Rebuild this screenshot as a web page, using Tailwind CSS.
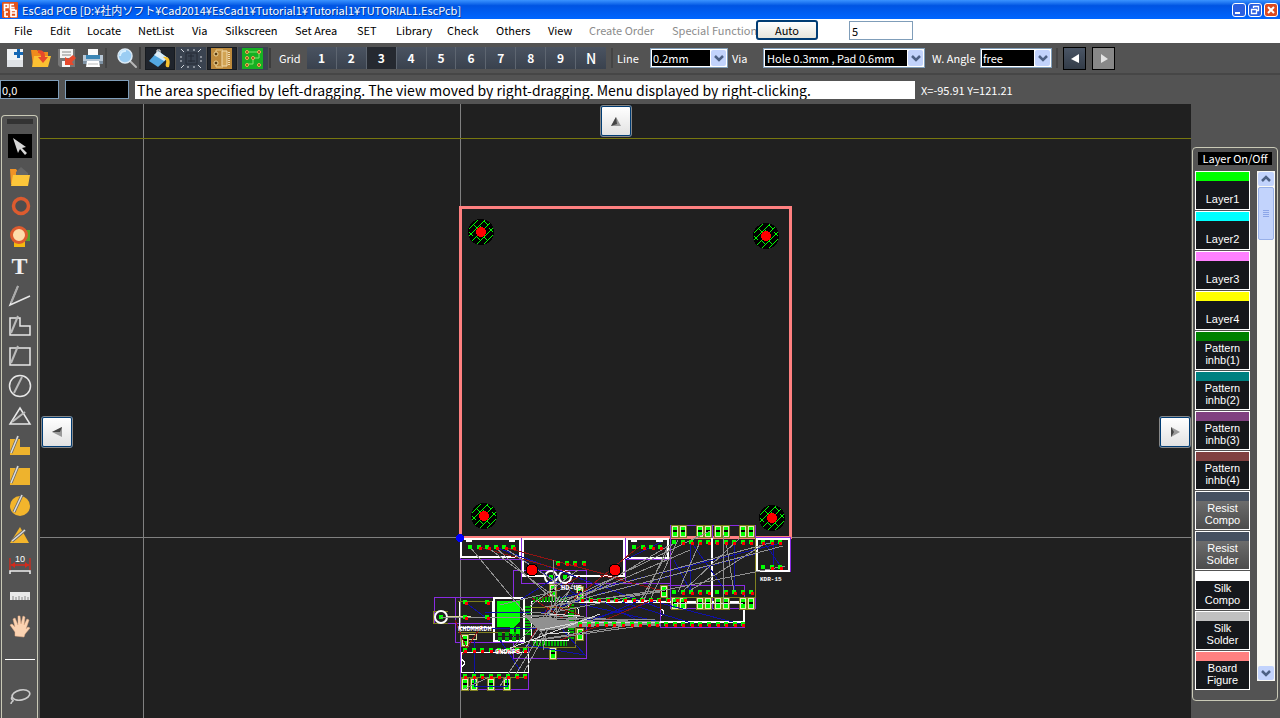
<!DOCTYPE html>
<html lang="en">
<head>
  <meta charset="UTF-8" />
  <meta name="viewport" content="width=device-width, initial-scale=1.0" />
  <title>EsCad PCB</title>
  <script src="https://cdn.jsdelivr.net/npm/@tailwindcss/browser@4"></script>
</head>
<body class="h-screen flex flex-col overflow-hidden bg-[#535353] font-['Noto_Sans_CJK_JP',sans-serif] text-[11px] leading-4 text-white">

  <!-- Title bar -->
  <header class="h-[19px] shrink-0 flex items-center gap-1 px-[2px] bg-linear-to-b from-[#3a93ff] via-[#0054e3] via-30% to-[#0066ff]">
    <svg class="w-4 h-4 shrink-0" viewBox="0 0 16 16">
      <rect width="16" height="16" rx="1" fill="#e2531d" />
      <path d="M2.500 9V2.500h3.500v3H3M8 5.500H12.500M12 2.500H8.500v5H13M3 15V10h3M3 14.500h3M9 15V7.500M9 8.500h5v2.500H9M14 11.500v3H9" fill="none" stroke="#fff" stroke-width="1.700" />
    </svg>
    <h1 class="flex-1 leading-4 whitespace-nowrap [text-shadow:1px_1px_#003a9c]">EsCad PCB [D:¥社内ソフト¥Cad2014¥EsCad1¥Tutorial1¥Tutorial1¥TUTORIAL1.EscPcb]</h1>
    <div class="flex gap-[2px]">
      <button aria-label="Minimize" class="w-[14px] h-[14px] rounded-[3px] border border-white bg-[#2a5fe0]"><svg viewBox="0 0 12 12"><path d="M2 9h5" stroke="#fff" stroke-width="2" /></svg></button>
      <button aria-label="Restore" class="w-[14px] h-[14px] rounded-[3px] border border-white bg-[#2a5fe0]"><svg viewBox="0 0 12 12"><path d="M4.500 4V2.500h5v4H8M2.500 5.500h5v4h-5z" fill="none" stroke="#fff" stroke-width="1.300" /></svg></button>
      <button aria-label="Close" class="w-[14px] h-[14px] rounded-[3px] border border-white bg-[#dc4a20]"><svg viewBox="0 0 12 12"><path d="M3 3l6 6M9 3l-6 6" stroke="#fff" stroke-width="2" /></svg></button>
    </div>
  </header>

  <!-- Menu -->
  <nav class="h-6 shrink-0 flex bg-white text-black">
    <div class="grid grid-cols-[36px_37px_51px_54px_33px_70px_62px_39px_51px_49px_52px_41px_83px_84px] pl-[14px] pb-[2px] whitespace-nowrap">
      <button class="text-left">File</button>
      <button class="text-left">Edit</button>
      <button class="text-left">Locate</button>
      <button class="text-left">NetList</button>
      <button class="text-left">Via</button>
      <button class="text-left">Silkscreen</button>
      <button class="text-left">Set Area</button>
      <button class="text-left">SET</button>
      <button class="text-left">Library</button>
      <button class="text-left">Check</button>
      <button class="text-left">Others</button>
      <button class="text-left">View</button>
      <button disabled class="text-left text-[#8c8c8c]">Create Order</button>
      <button disabled class="text-left text-[#8c8c8c]">Special Function</button>
    </div>
    <button class="w-[62px] h-5 mt-px rounded-[3px] border-2 border-[#003c74] bg-linear-to-b from-white to-[#e6e5dc] leading-4">Auto</button>
    <input aria-label="Count" value="5" class="w-16 h-[19px] mt-[2px] ml-[31px] px-[2px] border border-[#7f9db9] bg-white leading-4" />
  </nav>

  <!-- Toolbar -->
  <div class="h-8 shrink-0 flex items-center border-b-2 border-[#464646] whitespace-nowrap">
    <div class="flex items-center gap-[6px] pl-[5px]">
      <button aria-label="New"><svg class="w-5 h-5" viewBox="0 0 20 20"><path d="M2 1h16v18H2z" fill="#f1f3f5" /><path d="M2 12h16v7H2z" fill="#dfe2e6" /><path d="M13.500 1v9M9 5.500h9" stroke="#1769b5" stroke-width="3" /></svg></button>
      <button aria-label="Open"><svg class="w-5 h-5" viewBox="0 0 20 20"><path d="M0 2h6l2 2h9v14H2z" fill="#f08a1c" /><path d="M3 8h17l-3 11H1z" fill="#fcc032" /><path d="M7 2c6 0 7 3 7 7h3l-5 6-5-6h3c0-3-1-4-3-4z" fill="#e8492c" /></svg></button>
      <button aria-label="Save"><svg class="w-5 h-5" viewBox="0 0 20 20"><path d="M1 1h17v18H3l-2-2z" fill="#777" /><path d="M3 1h13v9H3zM5 13h8v6H5z" fill="#f5f5f5" /><path d="M5 4h9M5 7h9" stroke="#888" /><path d="M16 7l3 3-4 4 2 3H8V9l3 2z" fill="#e8492c" /></svg></button>
      <button aria-label="Print"><svg class="w-5 h-5" viewBox="0 0 20 20"><path d="M5 1h10v8H5z" fill="#fafafa" /><path d="M0 7h20v8H0z" fill="#b9c8d6" /><path d="M3 7h14v4H3z" fill="#3b86b5" /><path d="M0 13h20v3H0z" fill="#7e92a4" /><path d="M4 13h12l1 6H3z" fill="#fff" /><path d="M5 16h10" stroke="#bbb" /></svg></button>
    </div>
    <span class="w-[2px] h-5 ml-[2px] bg-[#444]"></span>
    <button aria-label="Zoom" class="ml-[9px]"><svg class="w-[22px] h-[22px]" viewBox="0 0 22 22"><path d="M13 13l7 7" stroke="#b8b8b8" stroke-width="2" stroke-linecap="round" /><circle cx="9" cy="9" r="7" fill="#9bcdf3" stroke="#dceaf5" stroke-width="1.500" /><path d="M4 9a5 5 0 0 1 6-5" stroke="#d9f0ff" fill="none" stroke-width="2" /></svg></button>
    <span class="w-[2px] h-[22px] ml-px mr-[4px] bg-[#3c3c3c]"></span>
    <div class="flex gap-px">
      <button aria-label="Fill" class="w-[30px] h-[23px] flex items-center justify-center bg-[#1f242c] border border-[#171b20]">
        <svg class="w-[24px] h-[21px]" viewBox="0 0 24 21"><path d="M10 3l10 7-10 9-9-6z" fill="#53a8e2" /><path d="M10 3l10 7-4 3-10-6z" fill="#d5ecfa" /><path d="M9 7V2l3 0v6" fill="none" stroke="#eee" /><path d="M15 9c6-1 8 3 6 10-3 1-4-1-3-4s-1-4-3-6z" fill="#f9c22e" /></svg>
      </button>
      <button aria-label="Select area" class="w-[30px] h-[23px] flex items-center justify-center bg-[#3a4350]">
        <svg class="w-[26px] h-[21px]" viewBox="0 0 26 21"><path d="M8 5h11v11H8zM10 8h6M10 13h7M13 6v8" fill="none" stroke="#242b34" /><path d="M3 1l3 3M23 1l-3 3M3 20l3-3M23 20l-3-3M9 2h2M15 2h2M9 19h2M15 19h2M3 8v2M3 12v2M23 8v2M23 12v2" stroke="#d5d9de" /></svg>
      </button>
      <button aria-label="Component side" class="w-[30px] h-[23px] flex items-center justify-center bg-[#1f242c] border border-[#171b20]">
        <svg class="w-[22px] h-[21px]" viewBox="0 0 22 21"><path d="M0 0h21v21H0z" fill="#bd8a3c" /><path d="M5 5v-3h7M5 16v3h7" fill="none" stroke="#e9cd8d" /><circle cx="5" cy="6" r="2" fill="#5a3c11" stroke="#f3d998" /><circle cx="5" cy="15" r="2" fill="#5a3c11" stroke="#f3d998" /><path d="M11 3h5v15h-5z" fill="#d2a454" stroke="#f2dcae" /><path d="M18 4v13" stroke="#f2dcae" stroke-dasharray="1 1" stroke-width="2" /></svg>
      </button>
      <button aria-label="Solder side" class="w-[30px] h-[23px] flex items-center justify-center bg-[#3a4350]">
        <svg class="w-[22px] h-[21px]" viewBox="0 0 22 21"><path d="M0 0h21v21H0z" fill="#16b022" /><path d="M5 4h6M11 10h6M5 16h6M11 4h6M17 4v6M11 10v6" stroke="#7ee56d" /><g fill="#8c3b10" stroke="#f0b65a"><circle cx="5" cy="4" r="1.500" /><circle cx="17" cy="4" r="1.500" /><circle cx="5" cy="10" r="1.500" /><circle cx="11" cy="10" r="1.500" /><circle cx="5" cy="17" r="1.500" /><circle cx="17" cy="17" r="1.500" /></g></svg>
      </button>
    </div>
    <span class="w-[2px] h-5 ml-px bg-[#3c3c3c]"></span>
    <span class="w-[36px] pl-2">Grid</span>
    <div class="grid grid-cols-10 w-[299px] h-[22px] divide-x divide-[#5d6570] bg-linear-to-b from-[#4a5361] to-[#3a424e] font-bold text-[12px]">
      <button>1</button>
      <button>2</button>
      <button class="bg-[#252930]">3</button>
      <button>4</button>
      <button>5</button>
      <button>6</button>
      <button>7</button>
      <button>8</button>
      <button>9</button>
      <button class="font-medium text-[14px]">N</button>
    </div>
    <span class="w-[2px] h-5 ml-[5px] bg-[#444]"></span>
    <label for="line" class="w-[37px] pl-1">Line</label>
    <div class="flex w-[78px] h-5 p-px border border-[#7f9db9] bg-white">
      <select id="line" class="flex-1 min-w-0 appearance-none bg-black pl-px leading-4 text-white"><option>0.2mm</option></select>
      <svg class="w-4 h-4 shrink-0 pointer-events-none" viewBox="0 0 16 16"><rect x="1" width="15" height="16" rx="2" fill="#c2d3fc" /><path d="M5 6l4 4 4-4" fill="none" stroke="#4d6185" stroke-width="2.500" /></svg>
    </div>
    <label for="via" class="w-[35px] pl-1">Via</label>
    <div class="flex w-[162px] h-5 p-px border border-[#7f9db9] bg-white">
      <select id="via" class="flex-1 min-w-0 appearance-none bg-black pl-[2px] leading-4 text-white"><option>Hole 0.3mm , Pad 0.6mm</option></select>
      <svg class="w-4 h-4 shrink-0 pointer-events-none" viewBox="0 0 16 16"><rect x="1" width="15" height="16" rx="2" fill="#c2d3fc" /><path d="M5 6l4 4 4-4" fill="none" stroke="#4d6185" stroke-width="2.500" /></svg>
    </div>
    <label for="angle" class="w-[55px] pl-[7px]">W. Angle</label>
    <div class="flex w-[72px] h-5 p-px border border-[#7f9db9] bg-white">
      <select id="angle" class="flex-1 min-w-0 appearance-none bg-black pl-px leading-4 text-white"><option>free</option></select>
      <svg class="w-4 h-4 shrink-0 pointer-events-none" viewBox="0 0 16 16"><rect x="1" width="15" height="16" rx="2" fill="#c2d3fc" /><path d="M5 6l4 4 4-4" fill="none" stroke="#4d6185" stroke-width="2.500" /></svg>
    </div>
    <span class="w-[2px] h-5 ml-1 bg-[#444]"></span>
    <button aria-label="Back" class="w-[23px] h-[23px] ml-[5px] border border-black bg-linear-to-b from-[#4a5565] to-[#333c48]"><svg viewBox="0 0 21 21"><path d="M7 11l8-5v9z" fill="#fff" /></svg></button>
    <button aria-label="Forward" class="w-[23px] h-[23px] ml-[6px] border border-black bg-[#888]"><svg viewBox="0 0 21 21"><path d="M15 11L8 6v9z" fill="#e4e4e4" /></svg></button>
  </div>

  <!-- Status row -->
  <div class="h-[29px] shrink-0 flex items-center whitespace-nowrap">
    <input aria-label="Position" value="0,0" class="w-[59px] h-[19px] px-px border border-[#7f9db9] bg-black leading-4" />
    <input aria-label="Size" class="w-16 h-[19px] ml-[6px] px-px border border-[#7f9db9] bg-black" />
    <p class="w-[780px] h-[18px] ml-[6px] pl-[2px] overflow-hidden bg-white text-black text-[14px] leading-[18px]">The area specified by left-dragging. The view moved by right-dragging. Menu displayed by right-clicking.</p>
    <output class="ml-[6px]">X=-95.91 Y=121.21</output>
  </div>

  <main class="flex-1 min-h-0 flex">

    <!-- Tools -->
    <aside class="w-10 shrink-0 pt-[11px] pl-px pr-[2px]">
      <div class="h-full flex flex-col items-center rounded-t-[4px] border border-b-0 border-[#c9c9b6] pt-[3px]">
        <div class="w-[26px] h-[5px] shrink-0 mb-[7px] bg-[#333]"></div>
        <button aria-label="Select" class="h-[30px] shrink-0"><svg class="w-6 h-6" viewBox="0 0 24 24"><path d="M0 0h24v24H0z" fill="#000" /><path d="M5 4l13 9-4 1 5 5-2 2-5-6-2 4z" fill="#d6d6d6" /></svg></button>
        <button aria-label="Parts" class="h-[30px] shrink-0"><svg class="w-6 h-6" viewBox="0 0 24 24"><path d="M2 5h6l2 3h9v12H3z" fill="#f09326" /><path d="M8 8l5-5 7 6v4H8z" fill="#666" /><path d="M5 11h17l-2 11H3z" fill="#fcc63a" /></svg></button>
        <button aria-label="Pad" class="h-[30px] shrink-0"><svg class="w-6 h-6" viewBox="0 0 24 24"><circle cx="13" cy="12" r="7.500" fill="#4d4d4d" stroke="#dc5b2f" stroke-width="3.500" /></svg></button>
        <button aria-label="Via" class="h-[30px] shrink-0"><svg class="w-6 h-6" viewBox="0 0 24 24"><path d="M15 6h7v11h-7z" fill="#56a02b" /><path d="M6 16h11v7H6z" fill="#f4b90f" /><circle cx="11" cy="11" r="7.500" fill="#fddcaa" stroke="#dc5b2f" stroke-width="3" /></svg></button>
        <button class="h-[30px] shrink-0 font-['Liberation_Serif',serif] font-bold text-[24px] leading-6 text-[#eee]">T</button>
        <button aria-label="Line" class="h-[30px] shrink-0"><svg class="w-6 h-6" viewBox="0 0 24 24"><path d="M10 2L2 21l20-9" fill="none" stroke="#e8e8e8" stroke-width="1.500" /><path d="M10 2L3 19" stroke="#aaa" stroke-width="2" /></svg></button>
        <button aria-label="Polyline" class="h-[30px] shrink-0"><svg class="w-6 h-6" viewBox="0 0 24 24"><path d="M2 4h10v8h10v9H2z" fill="none" stroke="#e8e8e8" stroke-width="1.500" /><path d="M10 2L3 19" stroke="#bbb" stroke-width="2" /></svg></button>
        <button aria-label="Rectangle" class="h-[30px] shrink-0"><svg class="w-6 h-6" viewBox="0 0 24 24"><path d="M2 4h20v17H2z" fill="none" stroke="#e8e8e8" stroke-width="1.500" /><path d="M10 2L3 19" stroke="#bbb" stroke-width="2" /></svg></button>
        <button aria-label="Circle" class="h-[30px] shrink-0"><svg class="w-6 h-6" viewBox="0 0 24 24"><circle cx="12" cy="12" r="10.500" fill="none" stroke="#e8e8e8" stroke-width="1.500" /><path d="M14 3L6 19" stroke="#bbb" stroke-width="2" /></svg></button>
        <button aria-label="Triangle" class="h-[30px] shrink-0"><svg class="w-6 h-6" viewBox="0 0 24 24"><path d="M12 4l10 16H2z" fill="none" stroke="#e8e8e8" stroke-width="1.500" /><path d="M17 8L4 18" stroke="#bbb" stroke-width="2" /></svg></button>
        <button aria-label="Filled polyline" class="h-[30px] shrink-0"><svg class="w-6 h-6" viewBox="0 0 24 24"><path d="M2 5h10v8h10v8H2z" fill="#eeb32d" /><path d="M10 2L3 19" stroke="#666" stroke-width="3" /><path d="M10 2L3 19" stroke="#ddd" stroke-width="1.500" /></svg></button>
        <button aria-label="Filled rectangle" class="h-[30px] shrink-0"><svg class="w-6 h-6" viewBox="0 0 24 24"><path d="M2 4h20v17H2z" fill="#eeb32d" /><path d="M10 2L3 19" stroke="#666" stroke-width="3" /><path d="M10 2L3 19" stroke="#ddd" stroke-width="1.500" /></svg></button>
        <button aria-label="Filled circle" class="h-[30px] shrink-0"><svg class="w-6 h-6" viewBox="0 0 24 24"><circle cx="12" cy="12" r="10" fill="#f3b52c" /><path d="M14 1L6 18" stroke="#666" stroke-width="3" /><path d="M14 1L6 18" stroke="#ddd" stroke-width="1.500" /></svg></button>
        <button aria-label="Filled triangle" class="h-[30px] shrink-0"><svg class="w-6 h-6" viewBox="0 0 24 24"><path d="M12 3l9 16H2z" fill="#f3b52c" /><path d="M17 6L4 17" stroke="#666" stroke-width="3" /><path d="M17 6L4 17" stroke="#ddd" stroke-width="1.500" /></svg></button>
        <button aria-label="Dimension" class="h-[30px] shrink-0"><svg class="w-6 h-6" viewBox="0 0 24 24"><text x="12" y="8" text-anchor="middle" fill="#fff" font-size="9" font-family="Liberation Sans">10</text><path d="M2 4v12M22 4v12M3 11h18" stroke="#d42a1c" stroke-width="1.300" /><path d="M3 11l4-3v6zM21 11l-4-3v6z" fill="#d42a1c" /><path d="M2 20v-3h20v3" fill="none" stroke="#eee" stroke-width="1.500" /></svg></button>
        <button aria-label="Ruler" class="h-[30px] shrink-0"><svg class="w-6 h-6" viewBox="0 0 24 24"><path d="M2 8h20v8H2z" fill="#e9e9e9" /><path d="M5 12v4M8 13v3M11 12v4M14 13v3M17 12v4M20 13v3" stroke="#888" /></svg></button>
        <button aria-label="Pan" class="h-[30px] shrink-0"><svg class="w-6 h-6" viewBox="0 0 24 24"><path d="M7 22v-4l-5-7 2-1 3 3L5 5l2-1 3 7V2h2l1 8 2-8 2 1-1 8 3-6 2 1-3 9 2-2 2 1-5 6-1 3z" fill="#fbd3b2" stroke="#e8ae86" stroke-width="0.500" /></svg></button>
        <hr class="w-[30px] shrink-0 mt-[18px] mb-[21px] border-t border-white" />
        <button aria-label="Lasso" class="h-[30px] shrink-0"><svg class="w-6 h-6" viewBox="0 0 24 24"><ellipse cx="13" cy="11" rx="9" ry="5" transform="rotate(-12 13 11)" fill="none" stroke="#ccc" stroke-width="1.700" /><path d="M4 13c-2 3 2 3 1 4s-2 1-2 3" fill="none" stroke="#ccc" stroke-width="1.500" /></svg></button>
      </div>
    </aside>

    <!-- Board canvas, drawn in window coordinates -->
    <section class="relative flex-1 min-w-0 overflow-hidden bg-[#202020]">
      <svg class="absolute inset-0 w-full h-full" shape-rendering="crispEdges">
        <defs>
          <g id="hole">
            <circle r="13" fill="#000" />
            <path d="M-12 -3l9-9M-12 4L4-12M-9 9L9-9M-4 12L12-4M3 12l9-9M-8-8l4 4M3-11l4 4M8-4l4 4M-12 0l4 4M-5 4l4 4M3 5l4 4M-2-7l3 3" stroke="#00ff00" />
            <circle r="5" fill="#f00" />
          </g>
          <g id="chip">
            <path d="M-4-6h7V6h-7z" fill="#202020" stroke="#808020" />
            <path d="M-3-5h5V5h-5z" fill="#0f0" stroke="#e8e8c0" />
            <path d="M-2-1h4v2h-4z" fill="#000" />
          </g>
        </defs>
        <g transform="translate(-40 -104)" fill="none">
          <path d="M143.500 104V2000M460.500 104V2000M40 537.500H4000" stroke="#808080" />
          <path d="M40 138.500H4000" stroke="#77770f" />
          <rect x="460.500" y="207.500" width="330" height="330" stroke="#ff8080" stroke-width="3" />
          <use href="#hole" x="481" y="232" />
          <use href="#hole" x="766" y="236" />
          <use href="#hole" x="484" y="516" />
          <use href="#hole" x="772" y="518" />

          <!-- part outlines -->
          <g stroke="#8a2be2">
            <path d="M460.500 538v21h61V538M521.500 538v45.500h149V538M625.500 538v45M626 559.500h45" />
            <path d="M670.500 525.500h85v83h-85zM712.500 525v83M755.500 537.500h35v34h-35z" />
            <path d="M660.500 585.500h84v42h-84zM513.500 570.500h73v88h-73z" />
            <path d="M434.500 597.500h60v26h-60zM455.500 597.500h68v45h-68zM460.500 643v46h68v-46" />
          </g>
          <g stroke="#fff" stroke-width="2">
            <path d="M461 539h59v18h-59zM523 539h101v37H523zM627 539h41v19h-41zM757 539h32v32h-32z" />
            <path d="M712 538v60M579 602h165v20H579M494 598h30v43h-30z" />
          </g>
          <path d="M466 540h6M509 540h6M631 540h6M656 540h7" stroke="#fff" stroke-width="3" />
          <path d="M459.500 601.500h33v26h-33zM461.500 652.500h67v20h-67zM531.500 601.500h37v39h-37zM661 609q6 3 0 7M461 659q7 4 0 8M576 607q6 5 0 11" stroke="#fff" />
          <path d="M447.500 611.500h-14v12h14M458 601.500h34M458 632.500h62M513 647.500h62v-40M528 571.500h10M578 607.500h-50M671 597.500h84V538M461 677.500h66" stroke="#808020" />
          <path d="M447 616.500h24M462 634h14v5h-14z" stroke="#d6d69a" />
          <g stroke="#fff" stroke-width="2" fill="#202020" shape-rendering="auto">
            <circle cx="441" cy="617" r="6" />
            <circle cx="551" cy="577" r="6" />
            <circle cx="565" cy="577" r="6" />
          </g>
          <path d="M439 617h4M549 577h4M563 577h4" stroke="#0f0" stroke-width="4" />

          <!-- QFP and display pads -->
          <path d="M497 601h23v20l-6 6h-17z" fill="#0f0" />
          <path d="M498 634h22M498 639h22" stroke="#0a0" stroke-width="4" stroke-dasharray="4 3" />
          <path d="M510 630h10" stroke="#0f0" stroke-width="7" stroke-dasharray="4 2" />
          <path d="M533 599h34M533 643h34" stroke="#00b000" stroke-width="5" stroke-dasharray="2 1" />
          <path d="M571 604v36M528 606v30" stroke="#00b000" stroke-width="6" stroke-dasharray="2 1" />

          <!-- chips -->
          <use href="#chip" x="675" y="531" /><use href="#chip" x="683" y="531" /><use href="#chip" x="700" y="531" /><use href="#chip" x="708" y="531" />
          <use href="#chip" x="718" y="531" /><use href="#chip" x="726" y="531" /><use href="#chip" x="743" y="531" /><use href="#chip" x="751" y="531" />
          <use href="#chip" x="675" y="603" /><use href="#chip" x="683" y="603" /><use href="#chip" x="700" y="603" /><use href="#chip" x="708" y="603" />
          <use href="#chip" x="718" y="603" /><use href="#chip" x="726" y="603" /><use href="#chip" x="743" y="603" /><use href="#chip" x="751" y="603" />
          <use href="#chip" x="465" y="684" /><use href="#chip" x="474" y="684" /><use href="#chip" x="491" y="684" /><use href="#chip" x="507" y="684" />
          <use href="#chip" x="553" y="653" /><use href="#chip" x="465" y="640" /><use href="#chip" x="580" y="592" /><use href="#chip" x="580" y="634" />
          <use href="#chip" x="664" y="591" /><use href="#chip" x="553" y="590" />

          <!-- net lines -->
          <g stroke="#1010a8">
            <path d="M495 547L660 608M503 547l80 52M625 560l36-18M560 598L781 543M555 606l200-52M580 604l80 18M580 622l80-22M615 600l80 24M691 542l-1 50M691 542l34 48M734 542v50M674 560l17 32M764 542l17 25M773 543v24" />
            <path d="M465 602l25 19M485 612h60l60-20M474 640v46h33v-10M545 610l40 45-60-10M520 600l38-24M660 603l84 22M600 600l40 22M640 600l-50 22M465 628l80 0M500 640l20 30" />
          </g>
          <g stroke="#901414">
            <path d="M503 547l120 32M479 547l90 25M578 596l62-50M540 600l40-24M530 640l20-35 30 10M455 620l12 30M560 640l44-16M600 575l60 15v20M650 601l-50 21M482 625l-20 30M532 598l30 20 20-30" />
          </g>
          <g stroke="#909090">
            <path d="M470 547l75 90M487 547l75 55M495 547l55 50M503 547l60 40M560 610l110-65M560 606l130-56M555 606l155-75M560 600l210-57M563 604l220-58M555 612l230-46M545 607l115-17M640 601l34-60M650 600l28-60M643 602l25-56" />
            <path d="M682 592l58-54M691 590l70-44M700 542l-22 50M723 535v68M726 542l8 50M500 605l80-20M441 617h90M530 612l130 12M525 616l136 10M530 618l125 2M530 622l110 4M530 628l130-4M535 640l90-14M500 686l60-90M516 674l40-66M524 672l50-90" />
            <path d="M522 616q50-2 75 7h64M540 640l100-14M530 606l48-36M570 590l-60 60M464 689l25-12M553 560l4 60M590 600l70-8M543 650l10-54" />
          </g>
          <path d="M525 617l50 4h85v4h-60l-60 6z" fill="#909090" />
          <path d="M540 630l40-8h80M500 652l100-38M585 602l75-2M673 603l70 1M550 614l30 2M548 634l22-2" stroke="#d8d8d8" />

          <!-- pads: green squares with red centres -->
          <g stroke="#0f0" stroke-width="4">
            <path d="M468 547h48M632 547h32M672 542h41M715 542h40M672 592h41M715 592h40M761 542h24M761 567h24M463 650h64M463 676h64M580 600h111M578 624h168M556 563h33" stroke-dasharray="4 4.600" />
            <path d="M463 602h4M485 602h4M463 617h4M485 617h4" />
          </g>
          <g stroke="#f00" stroke-width="3">
            <path d="M479 548h38M643 548h22M682 543h31M716 543h40M682 593h31M725 593h30M762 543h24M771 568h15M464 651h64M464 677h64M581 600h111M579 625h168M557 564h33" stroke-dasharray="3 5.600" />
            <path d="M465 603h3M487 603h3M465 618h3M487 618h3" />
          </g>
          <circle cx="532" cy="570" r="6" fill="#f00" stroke="#000" />
          <circle cx="615" cy="570" r="6" fill="#f00" stroke="#000" />
          <circle cx="460" cy="538" r="4" fill="#00f" />

          <g fill="#fff" font-family="Liberation Mono" font-size="7" font-weight="bold">
            <text x="760" y="581" font-size="6">KDR-15</text>
            <text x="458" y="631">KHDMHRDH</text>
            <text x="495" y="654">GNDWPS</text>
            <text x="561" y="590">HD-US</text>
          </g>
        </g>
      </svg>

      <button aria-label="Scroll up" class="absolute top-px left-[560px] w-8 h-8 rounded-[3px] border-2 border-[#003c74] outline outline-[#888] -outline-offset-1 bg-linear-to-b from-white to-[#e2e2e2]"><svg viewBox="0 0 28 28"><path d="M14 10l5 9H9z" fill="#999" /><path d="M14 10l-5 9 6-2z" fill="#444" /></svg></button>
      <button aria-label="Scroll left" class="absolute top-[312px] left-px w-8 h-8 rounded-[3px] border-2 border-[#003c74] outline outline-[#888] -outline-offset-1 bg-linear-to-b from-white to-[#e2e2e2]"><svg viewBox="0 0 28 28"><path d="M9 14l10-5v10z" fill="#999" /><path d="M9 14l10-5-2 5z" fill="#444" /></svg></button>
      <button aria-label="Scroll right" class="absolute top-[312px] right-0 w-8 h-8 rounded-[3px] border-2 border-[#003c74] outline outline-[#888] -outline-offset-1 bg-linear-to-b from-white to-[#e2e2e2]"><svg viewBox="0 0 28 28"><path d="M19 14L10 9v10z" fill="#999" /><path d="M10 9v10l3-5z" fill="#444" /></svg></button>
    </section>

    <!-- Layers -->
    <aside class="w-[89px] shrink-0 pt-[43px] pb-[17px] pl-px pr-[2px]">
      <div class="h-full flex flex-col rounded-[4px] border border-[#c9c9b6] pt-1 pl-[2px] pr-[2px]">
        <h2 class="self-center w-[74px] h-[13px] mb-[6px] bg-black text-center leading-[13px] whitespace-nowrap">Layer On/Off</h2>
        <div class="flex-1 min-h-0 flex justify-between pb-[19px]">
          <div class="w-[55px] flex flex-col gap-px text-center font-['Liberation_Sans',sans-serif] leading-3">
            <button class="h-[39px] shrink-0 flex flex-col border border-white bg-[#15171b]"><span class="w-full h-[9px] mb-3 shrink-0 bg-[#00ff00]"></span><span class="w-full">Layer1</span></button>
            <button class="h-[39px] shrink-0 flex flex-col border border-white bg-[#15171b]"><span class="w-full h-[9px] mb-3 shrink-0 bg-[#00ffff]"></span><span class="w-full">Layer2</span></button>
            <button class="h-[39px] shrink-0 flex flex-col border border-white bg-[#15171b]"><span class="w-full h-[9px] mb-3 shrink-0 bg-[#ff80ff]"></span><span class="w-full">Layer3</span></button>
            <button class="h-[39px] shrink-0 flex flex-col border border-white bg-[#15171b]"><span class="w-full h-[9px] mb-3 shrink-0 bg-[#ffff00]"></span><span class="w-full">Layer4</span></button>
            <button class="h-[39px] shrink-0 flex flex-col border border-white bg-[#15171b]"><span class="w-full h-[9px] mb-px shrink-0 bg-[#008000]"></span><span class="w-full">Pattern<br />inhb(1)</span></button>
            <button class="h-[39px] shrink-0 flex flex-col border border-white bg-[#15171b]"><span class="w-full h-[9px] mb-px shrink-0 bg-[#008080]"></span><span class="w-full">Pattern<br />inhb(2)</span></button>
            <button class="h-[39px] shrink-0 flex flex-col border border-white bg-[#15171b]"><span class="w-full h-[9px] mb-px shrink-0 bg-[#804080]"></span><span class="w-full">Pattern<br />inhb(3)</span></button>
            <button class="h-[39px] shrink-0 flex flex-col border border-white bg-[#15171b]"><span class="w-full h-[9px] mb-px shrink-0 bg-[#804040]"></span><span class="w-full">Pattern<br />inhb(4)</span></button>
            <button class="h-[39px] shrink-0 flex flex-col border border-white bg-linear-to-b from-[#777] to-[#4c4c4c]"><span class="w-full h-[9px] mb-px shrink-0 bg-[#465060]"></span><span class="w-full">Resist<br />Compo</span></button>
            <button class="h-[39px] shrink-0 flex flex-col border border-white bg-linear-to-b from-[#777] to-[#4c4c4c]"><span class="w-full h-[9px] mb-px shrink-0 bg-[#465060]"></span><span class="w-full">Resist<br />Solder</span></button>
            <button class="h-[39px] shrink-0 flex flex-col border border-white bg-[#15171b]"><span class="w-full h-[9px] mb-px shrink-0 bg-white"></span><span class="w-full">Silk<br />Compo</span></button>
            <button class="h-[39px] shrink-0 flex flex-col border border-white bg-[#15171b]"><span class="w-full h-[9px] mb-px shrink-0 bg-[#c0c0c0]"></span><span class="w-full">Silk<br />Solder</span></button>
            <button class="h-[39px] shrink-0 flex flex-col border border-white bg-[#15171b]"><span class="w-full h-[9px] mb-px shrink-0 bg-[#ff8080]"></span><span class="w-full">Board<br />Figure</span></button>
          </div>
          <div class="w-[18px] flex flex-col bg-[#f8f8f3]">
            <button aria-label="Layers up" class="h-4 shrink-0"><svg class="w-[18px] h-4" viewBox="0 0 18 16"><rect x="1" y="1" width="16" height="14" rx="2" fill="#c2d3fc" /><path d="M5 10l4-4 4 4" fill="none" stroke="#4d6185" stroke-width="2.500" /></svg></button>
            <div class="w-4 h-[53px] mx-px flex items-center justify-center rounded-[2px] border border-[#98b0e8] bg-[#c2d3fc]"><svg class="w-2 h-2" viewBox="0 0 8 8"><path d="M1 .5h6M1 2.500h6M1 4.500h6M1 6.500h6" stroke="#8ca6e8" /></svg></div>
            <button aria-label="Layers down" class="h-4 shrink-0 mt-auto"><svg class="w-[18px] h-4" viewBox="0 0 18 16"><rect x="1" y="1" width="16" height="14" rx="2" fill="#c2d3fc" /><path d="M5 6l4 4 4-4" fill="none" stroke="#4d6185" stroke-width="2.500" /></svg></button>
          </div>
        </div>
      </div>
    </aside>
  </main>
</body>
</html>
